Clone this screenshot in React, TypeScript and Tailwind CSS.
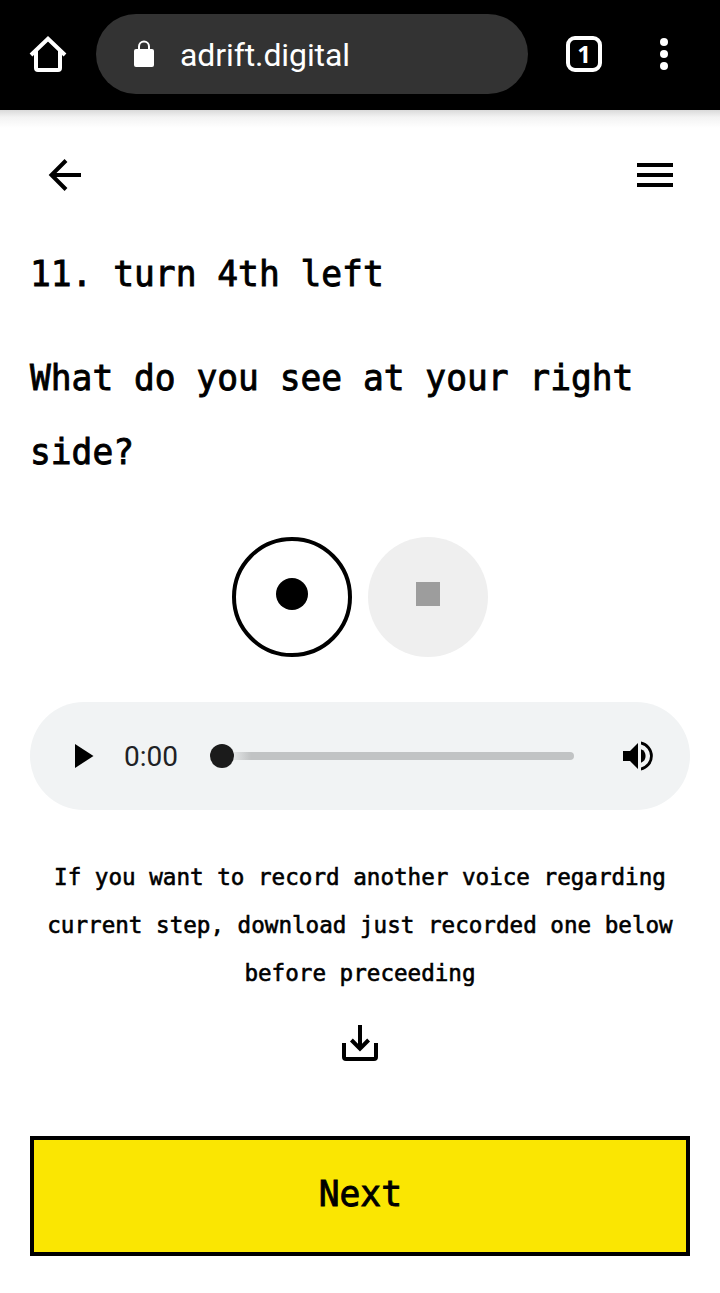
import React from 'react';

const mono = "font-['DejaVu_Sans_Mono','Liberation_Mono',monospace] text-black";

function BrowserBar() {
  return (
    <header className="flex h-[110px] shrink-0 items-start bg-black pt-[14px] text-white">
      <div className="flex h-20 w-24 items-center justify-center">
        <svg width="40" height="40" viewBox="0 0 40 40" fill="none" stroke="white" strokeWidth="4">
          <path d="M3 21 20 4.8 37 21" />
          <path d="M8 17v17q0 2 2 2h20q2 0 2-2V17" />
        </svg>
      </div>
      <div className="flex h-20 w-[432px] items-center rounded-full bg-[#333333] pl-[38px]">
        <svg width="20" height="28" viewBox="0 0 20 28" fill="none">
          <rect x="0" y="9" width="20" height="18" rx="2" fill="white" />
          <path d="M5 10V6.5a5 5 0 0 1 10 0V10" stroke="white" strokeWidth="2" />
        </svg>
        <span className="ml-[26px] pt-[2px] font-['Roboto',sans-serif] text-[32px] leading-10 tracking-[-0.1px]">adrift.digital</span>
      </div>
      <div className="ml-[38px] mt-[22px] flex size-9 items-center justify-center rounded-[9px] border-4 border-white pb-px font-['Noto_Sans',sans-serif] text-[24px] leading-7 font-bold">
        1
      </div>
      <svg className="ml-[58px] mt-[22px]" width="8" height="36" viewBox="0 0 8 36" fill="white">
        <circle cx="4" cy="6" r="4" />
        <circle cx="4" cy="18" r="4" />
        <circle cx="4" cy="30" r="4" />
      </svg>
    </header>
  );
}

function AudioPlayer() {
  return (
    <div className="mt-[45px] flex h-[108px] items-center rounded-full bg-[#f1f3f4] pl-[45px]">
      <svg width="19" height="24" viewBox="0 0 19 24">
        <path d="M0 0 18.5 12 0 24Z" />
      </svg>
      <span className="ml-[30px] w-[56px] pt-[2px] font-['Roboto',sans-serif] text-[28px] leading-8 text-[#202124]">0:00</span>
      <div className="ml-[30px] flex h-6 w-[364px] items-center">
        <div className="size-6 shrink-0 rounded-full bg-[#1b1b1b]" />
        <div className="h-2 flex-1 rounded-r-full bg-linear-to-r from-[#e2e4e5] via-[#c1c3c4] via-[5%] to-[#c1c3c4]" />
      </div>
      <svg className="ml-[49px]" width="31" height="30" viewBox="0 0 31 30">
        <path d="M0 10h7l8-8v26l-8-8H0Z" />
        <path d="M18 8.3a7.2 7.2 0 0 1 0 13.4Z" />
        <path d="M18 .5v3.1a11.7 11.7 0 0 1 0 22.8v3.1a14.8 14.8 0 0 0 0-29Z" />
      </svg>
    </div>
  );
}

export default function App() {
  return (
    <div className="flex h-[1293px] w-[720px] flex-col overflow-hidden bg-white">
      <BrowserBar />
      <div className="h-[18px] shrink-0 bg-linear-to-b from-[#dadada] via-[#f3f3f3] via-40% to-white" />
      <main className="flex flex-col px-[30px]">
        <nav className="flex h-[94px] items-center justify-between pr-[17px] pl-[18px]">
          <svg width="34" height="34" viewBox="0 0 34 34" fill="none" stroke="black" strokeWidth="4">
            <path d="M33 17H3M18 2.5 3.5 17 18 31.5" />
          </svg>
          <svg width="36" height="24" viewBox="0 0 36 24">
            <path d="M0 0h36v4H0zM0 10h36v4H0zM0 20h36v4H0z" />
          </svg>
        </nav>
        <h1 className={`${mono} mt-[15px] w-[688px] origin-left scale-x-[0.96] text-[36px] leading-[74px] [-webkit-text-stroke:0.9px_black]`}>11. turn 4th left</h1>
        <p className={`${mono} mt-[30px] w-[688px] origin-left scale-x-[0.96] text-[36px] leading-[74px] [-webkit-text-stroke:0.9px_black]`}>
          What do you see at your right side?
        </p>
        <div className="mt-[48px] flex justify-center gap-4">
          <button className="flex size-[120px] items-center justify-center rounded-full border-4 border-black pb-[6px]">
            <span className="size-8 rounded-full bg-black" />
          </button>
          <button className="flex size-[120px] items-center justify-center rounded-full bg-[#efefef] pb-[6px]">
            <span className="size-6 bg-[#9d9d9d]" />
          </button>
        </div>
        <AudioPlayer />
        <p className={`${mono} mt-[43px] -mx-[30px] scale-x-[0.961] text-center text-[23.5px] leading-[48px] [-webkit-text-stroke:0.6px_black]`}>
          If you want to record another voice regarding
          <br />
          current step, download just recorded one below
          <br />
          before preceeding
        </p>
        <svg className="mt-[28px] self-center" width="36" height="36" viewBox="0 0 36 36" fill="none" stroke="black" strokeWidth="4">
          <path d="M2 18v14q0 2 2 2h28q2 0 2-2V18M18 0v23M9.4 15 18 23.6 26.6 15" />
        </svg>
        <button className="mt-[75px] flex h-[120px] items-center justify-center border-4 border-black bg-[#fae602] pb-1">
          <span className={`${mono} scale-x-[0.96] text-[36px] leading-[74px] [-webkit-text-stroke:0.9px_black]`}>Next</span>
        </button>
      </main>
    </div>
  );
}
